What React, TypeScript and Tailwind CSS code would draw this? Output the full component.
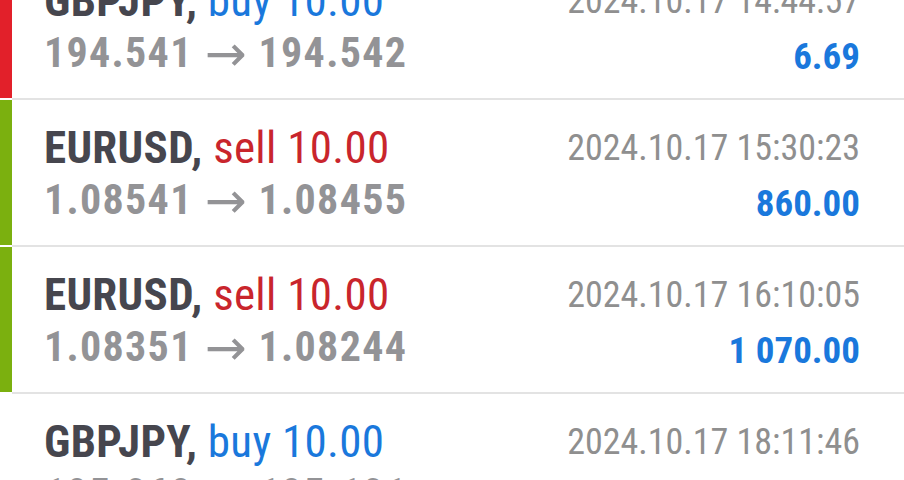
const trades = [
  {
    symbol: 'GBPJPY',
    side: 'buy',
    volume: '10.00',
    open: '194.541',
    close: '194.542',
    time: '2024.10.17 14:44:57',
    profit: '6.69',
    bar: 'bg-[#e2202a]',
  },
  {
    symbol: 'EURUSD',
    side: 'sell',
    volume: '10.00',
    open: '1.08541',
    close: '1.08455',
    time: '2024.10.17 15:30:23',
    profit: '860.00',
    bar: 'bg-[#7bb00f]',
  },
  {
    symbol: 'EURUSD',
    side: 'sell',
    volume: '10.00',
    open: '1.08351',
    close: '1.08244',
    time: '2024.10.17 16:10:05',
    profit: '1 070.00',
    bar: 'bg-[#7bb00f]',
  },
  {
    symbol: 'GBPJPY',
    side: 'buy',
    volume: '10.00',
    open: '195.069',
    close: '195.101',
    time: '2024.10.17 18:11:46',
    profit: '3 110.00',
    bar: 'bg-white',
  },
];

function TradeRow({ t }: { t: (typeof trades)[number] }) {
  return (
    <div className="flex h-[147px]">
      {/* side marker */}
      <div className={`w-3 shrink-0 border-b-2 border-white ${t.bar}`} />
      <div className="flex flex-1 items-start justify-between border-b-2 border-[#e3e3e3] pt-[22px] pl-8 pr-[44px]">
        <div>
          <div className="text-[45px] leading-[52px] tracking-[0.3px] whitespace-nowrap">
            <span className="font-bold text-[#46464e]">{t.symbol},</span>{' '}
            <span className={t.side === 'buy' ? 'text-[#1a78dc]' : 'text-[#c9252c]'}>
              {t.side} {t.volume}
            </span>
          </div>
          <div className="flex items-center h-[52px] text-[42px] leading-[52px] font-bold tracking-[1.3px] text-[#939396] whitespace-nowrap">
            <span>{t.open}</span>
            <span className="mx-[12px] mt-[2px] font-normal text-[50px] leading-none tracking-normal font-['DejaVu_Sans',sans-serif]">
              →
            </span>
            <span>{t.close}</span>
          </div>
        </div>
        <div className="text-right">
          <div className="text-[36px] leading-[52px] text-[#8f8f8f] whitespace-nowrap">{t.time}</div>
          <div className="pt-[4px] text-[37px] leading-[52px] font-bold text-[#1a78dc] whitespace-nowrap">
            {t.profit}
          </div>
        </div>
      </div>
    </div>
  );
}

export default function App() {
  return (
    <div
      className="h-[480px] w-[904px] overflow-hidden bg-white"
      style={{ fontFamily: '"Roboto Condensed", Roboto, "Liberation Sans", sans-serif' }}
    >
      <div className="-mt-[47px]">
        {trades.map((t, i) => (
          <TradeRow key={i} t={t} />
        ))}
      </div>
    </div>
  );
}
